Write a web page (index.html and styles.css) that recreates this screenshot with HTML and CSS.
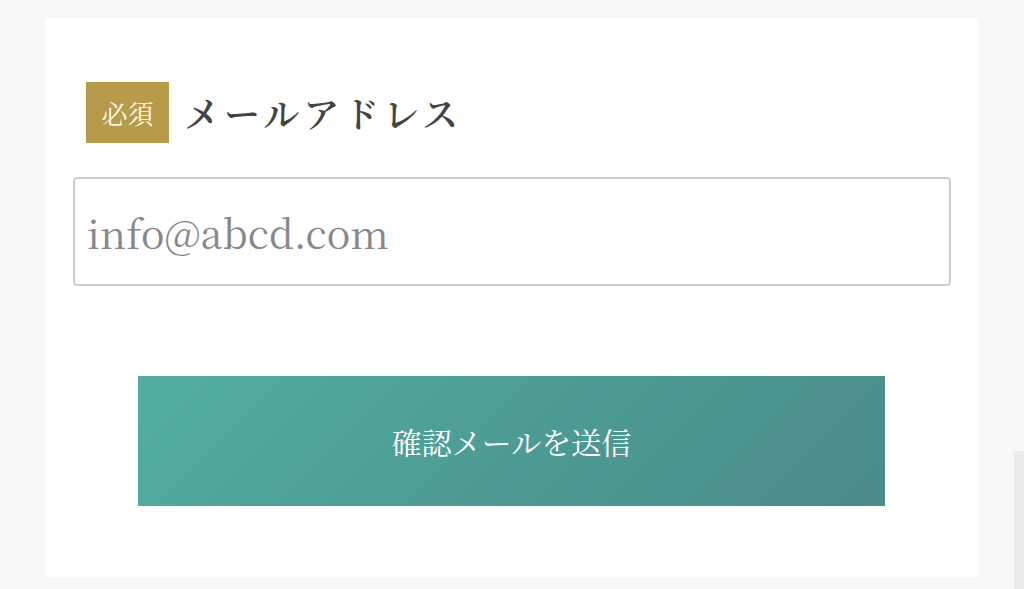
FILE: index.html
```html
<!DOCTYPE html>
<html lang="ja">
<head>
    <meta charset="UTF-8">
    <meta name="viewport" content="width=device-width, initial-scale=1.0">
    <title>メールアドレス登録</title>
    <link rel="stylesheet" href="styles.css">
</head>
<body>
    <div class="card">
        <form class="mail-form" onsubmit="event.preventDefault()">
            <div class="label-row">
                <span class="badge">必須</span>
                <label class="label" for="email">メールアドレス</label>
            </div>
            <input type="email" id="email" class="field" placeholder="info@abcd.com">
            <button type="submit" class="submit-btn">確認メールを送信</button>
        </form>
    </div>
    <div class="scroll-strip"></div>
</body>
</html>
```

FILE: styles.css
```css
body {
    font-family: "Noto Serif CJK JP", "Liberation Serif", "Noto Sans CJK JP", serif;
    margin: 0;
    padding: 18px 0 0 45px;
    background-color: #f7f7f7;
    height: 589px;
    box-sizing: border-box;
    overflow: hidden;
}
.card {
    background: #fff;
    width: 933px;
    height: 559px;
    box-sizing: border-box;
    padding: 64px 27px 0 28px;
}
.label-row {
    display: flex;
    align-items: center;
    margin-left: 13px;
}
.badge {
    background: #b89a4b;
    color: #fff8e6;
    width: 83px;
    height: 61px;
    display: flex;
    align-items: center;
    justify-content: center;
    font-size: 26px;
}
.label {
    font-size: 36px;
    font-weight: 600;
    color: #444;
    margin-left: 15px;
    letter-spacing: 4px;
}
.field {
    display: block;
    width: 100%;
    height: 109px;
    box-sizing: border-box;
    margin-top: 34px;
    padding: 0 12px;
    border: 2px solid #ccc;
    border-radius: 4px;
    font-family: "Noto Serif CJK JP", "Liberation Serif", serif;
    font-size: 39.5px;
    color: #333;
}
.field::placeholder {
    color: #888;
}
.submit-btn {
    display: block;
    margin: 90px 0 0 65px;
    width: 747px;
    height: 130px;
    border: none;
    background: linear-gradient(135deg, #53aea1 0%, #4d9c94 50%, #4a8b89 100%);
    color: #fff;
    font-family: "Noto Serif CJK JP", "Noto Sans CJK JP", serif;
    font-size: 30px;
    cursor: pointer;
}
.scroll-strip {
    position: absolute;
    right: 0;
    top: 451px;
    width: 10px;
    height: 138px;
    background: #ececec;
}
```
